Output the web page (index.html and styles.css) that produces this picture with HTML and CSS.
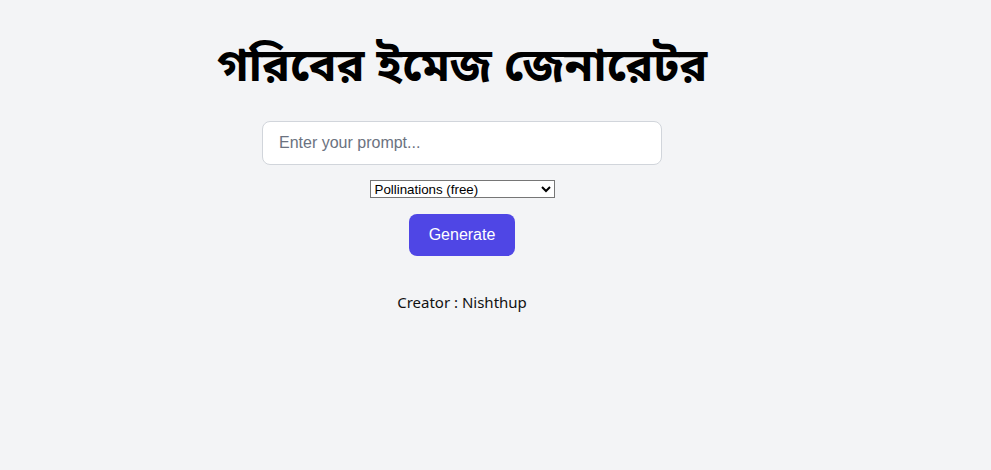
FILE: index.html
```html
<!DOCTYPE html>
<html lang="bn">
<head>
<meta charset="utf-8">
<title>গরিবের ইমেজ জেনারেটর</title>
<link rel="stylesheet" href="styles.css">
</head>
<body>
<main class="app">
  <h1 class="title">গরিবের ইমেজ জেনারেটর</h1>
  <input class="prompt" type="text" placeholder="Enter your prompt...">
  <select class="model">
    <option>Pollinations (free)</option>
  </select>
  <button class="generate" type="button">Generate</button>
  <p class="creator">Creator : Nishthup</p>
</main>
</body>
</html>
```

FILE: styles.css
```css
html, body {
  margin: 0;
  padding: 0;
  background: #f3f4f6;
  height: 100%;
}
.app {
  width: 924px;
  display: flex;
  flex-direction: column;
  align-items: center;
  padding-top: 38px;
  font-family: "Noto Sans", "Noto Sans Bengali", sans-serif;
}
.title {
  margin: 0;
  font-size: 46.5px;
  font-weight: 700;
  line-height: 62px;
  color: #000;
  font-family: "Noto Sans Bengali", "Noto Sans", "Noto Serif Bengali", sans-serif;
}
.prompt {
  box-sizing: border-box;
  margin-top: 21px;
  width: 400px;
  height: 44px;
  padding: 0 16px;
  border: 1px solid #d1d5db;
  border-radius: 8px;
  background: #fff;
  font-family: "Liberation Sans", Arial, sans-serif;
  font-size: 16px;
  outline: none;
}
.prompt::placeholder {
  color: #6b7280;
}
.model {
  margin-top: 15px;
  width: 185px;
  height: 18px;
  font-family: "Liberation Sans", Arial, sans-serif;
  font-size: 13.33px;
  border: 1px solid #767676;
  border-radius: 0;
  background: #fff;
  color: #000;
  padding: 0;
}
.generate {
  margin-top: 16px;
  width: 106px;
  height: 42px;
  border: none;
  border-radius: 8px;
  background: #4f46e5;
  color: #fff;
  font-family: "Liberation Sans", Arial, sans-serif;
  font-size: 16px;
  cursor: pointer;
}
.creator {
  margin: 35px 0 0;
  font-size: 15px;
  line-height: 22px;
  color: #111;
}
```
